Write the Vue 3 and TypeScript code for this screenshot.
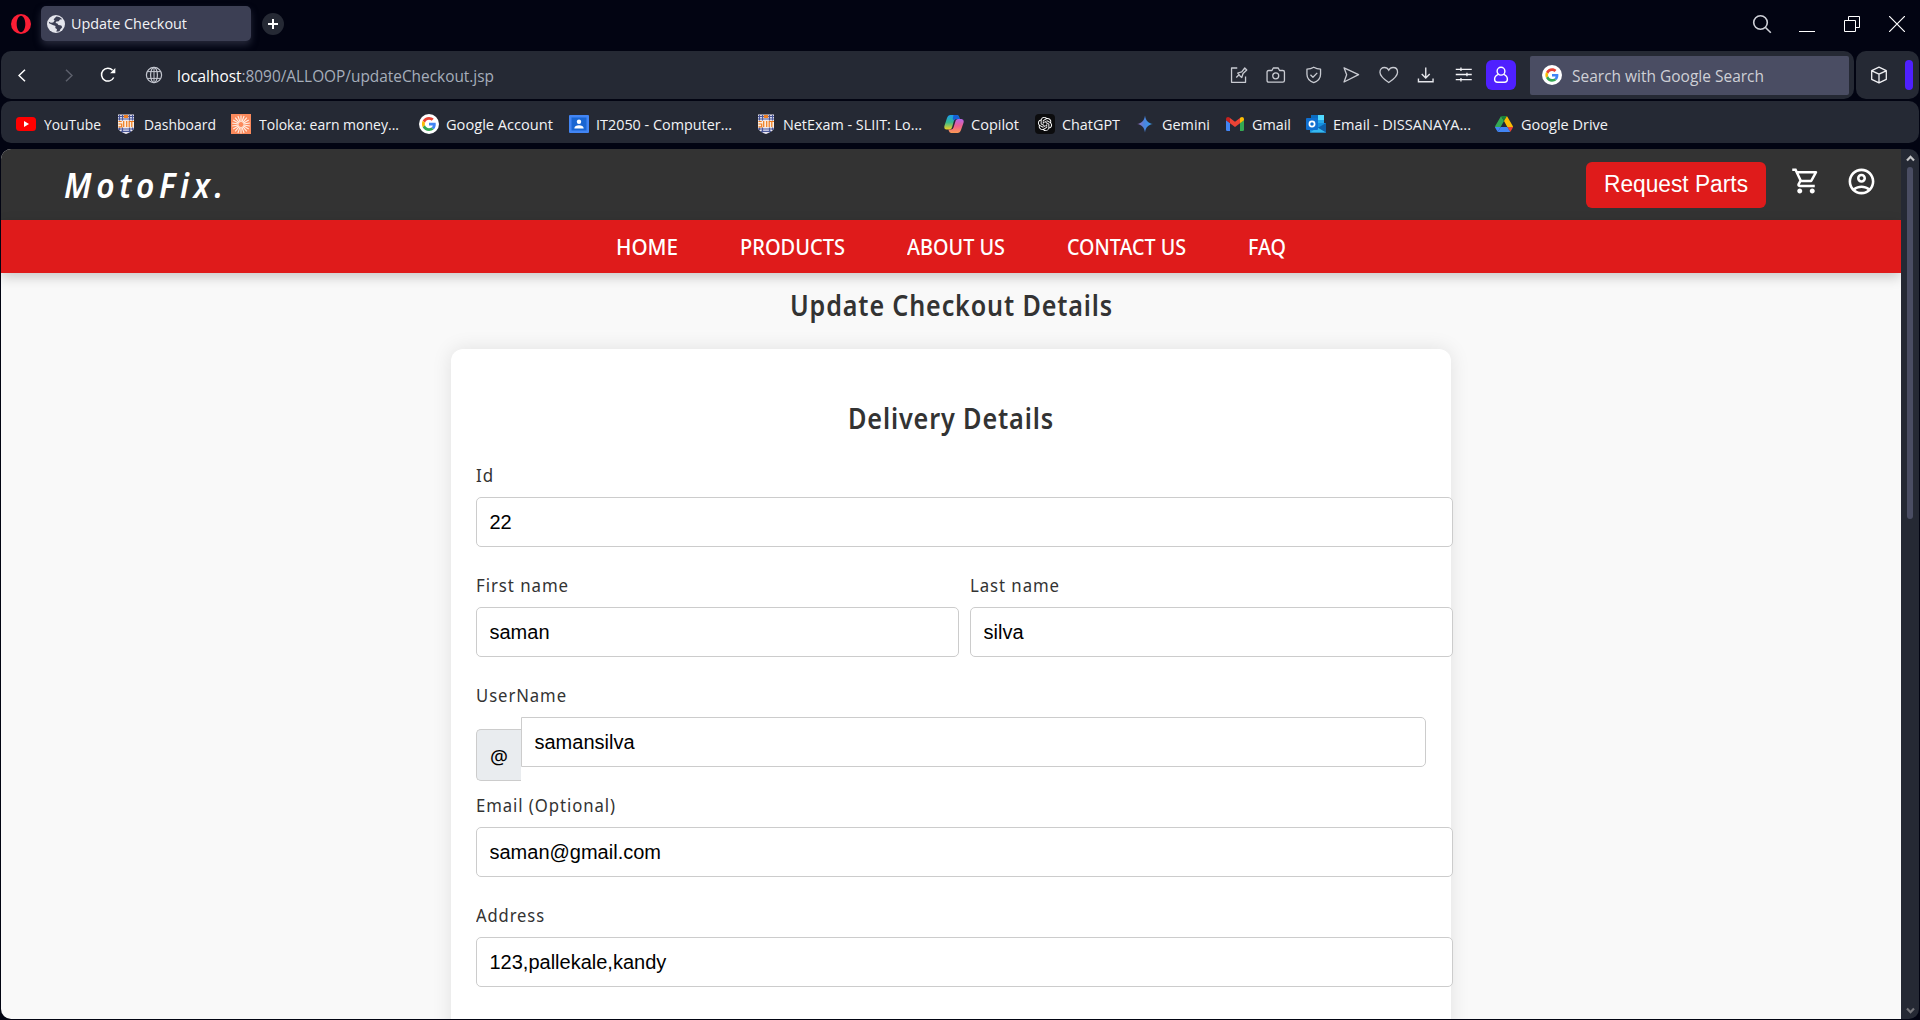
<script setup lang="ts">
import type { Directive } from 'vue'

interface Bookmark {
  icon: string
  label: string
  span: number
  offset: number
  text: number
}

interface Field {
  label: string
  labelWidth: number
  value: string
}

const bookmarks: Bookmark[] = [
  { icon: 'youtube', label: 'YouTube', span: 102, offset: 28, text: 57 },
  { icon: 'sliit', label: 'Dashboard', span: 113, offset: 26, text: 72 },
  { icon: 'toloka', label: 'Toloka: earn money...', span: 188, offset: 28, text: 140 },
  { icon: 'google', label: 'Google Account', span: 150, offset: 27, text: 107 },
  { icon: 'classroom', label: 'IT2050 - Computer...', span: 189, offset: 27, text: 136 },
  { icon: 'sliit', label: 'NetExam - SLIIT: Lo...', span: 186, offset: 25, text: 139 },
  { icon: 'copilot', label: 'Copilot', span: 91, offset: 27, text: 48 },
  { icon: 'chatgpt', label: 'ChatGPT', span: 102, offset: 27, text: 58 },
  { icon: 'gemini', label: 'Gemini', span: 89, offset: 25, text: 48 },
  { icon: 'gmail', label: 'Gmail', span: 80, offset: 26, text: 39 },
  { icon: 'outlook', label: 'Email - DISSANAYA...', span: 189, offset: 27, text: 138 },
  { icon: 'drive', label: 'Google Drive', span: 130, offset: 26, text: 87 },
]

const nav = [
  { label: 'HOME', width: 62 },
  { label: 'PRODUCTS', width: 105 },
  { label: 'ABOUT US', width: 98 },
  { label: 'CONTACT US', width: 119 },
  { label: 'FAQ', width: 38 },
]

const rows: Field[][] = [
  [{ label: 'Id', labelWidth: 18, value: '22' }],
  [
    { label: 'First name', labelWidth: 93, value: 'saman' },
    { label: 'Last name', labelWidth: 90, value: 'silva' },
  ],
]
const lastRows: Field[] = [
  { label: 'Email (Optional)', labelWidth: 140, value: 'saman@gmail.com' },
  { label: 'Address', labelWidth: 69, value: '123,pallekale,kandy' },
]

const rays = Array.from({ length: 18 }, (_, i) => i * 20)

/* Scales a text run horizontally so that it takes the given width. */
const vFit: Directive<HTMLElement, number> = {
  mounted(el, { value }) {
    const natural = el.getBoundingClientRect().width
    el.style.transform = `scaleX(${value / natural})`
    el.style.marginRight = `${value - natural}px`
  },
}
</script>

<template>
  <div class="browser">
    <div class="tabs">
      <svg class="opera" viewBox="0 0 20 20"><path fill="#fa1e35" fill-rule="evenodd" d="M10 0a10 10 0 1 0 0 20 10 10 0 0 0 0-20Zm0 1.800c2.500 0 4.300 3.700 4.300 8.200s-1.800 8.200-4.300 8.200S5.700 14.500 5.700 10 7.500 1.800 10 1.800Z" /></svg>
      <div class="tab">
        <svg width="18" height="18" viewBox="0 0 18 18"><circle cx="9" cy="9" r="9" fill="#e4e5ec" /><path fill="#3c3f54" d="M9.300 1.400c2.500 0 4.600 1.200 5.900 2.900l-2.200.2-1.300 1.800-2.400.1-.8 1.700 1.900.5 1 1.500 2.900.3.900 1.800-2 2.300-.6 1.700-3.200.6.600-2.600-1.700-1.300.2-1.900-2.700-1.100-3.700-1.600-.2-1.600 2 1 2.300-.2 1.400-1.900-1-1.300 1.300-1.400Z" /></svg>
        <span v-fit="116" class="fit">Update Checkout</span>
      </div>
      <div class="plus"><svg width="22" height="22" viewBox="0 0 22 22"><path d="M11 6v10M6 11h10" stroke="#fff" stroke-width="2" /></svg></div>
      <div class="window-controls">
        <svg width="20" height="20" viewBox="0 0 20 20"><g fill="none" stroke="#cfd1d8" stroke-width="1.600"><circle cx="8.500" cy="8.500" r="6.800" /><path d="m13.500 13.500 5.300 5.300" /></g></svg>
        <svg width="16" height="16" viewBox="0 0 16 16"><path d="M0 15.500h16" stroke="#fff" /></svg>
        <svg width="16" height="16" viewBox="0 0 16 16"><path d="M.5 4.500h11v11H.5zM4.500 4.500v-4h11v11h-4" fill="none" stroke="#fff" /></svg>
        <svg width="16" height="16" viewBox="0 0 16 16"><path d="m0 0 16 16M16 0 0 16" stroke="#fff" stroke-width="1.200" /></svg>
      </div>
    </div>

    <div class="toolbar">
      <div class="address">
        <svg class="back" width="8" height="13" viewBox="0 0 8 13"><path d="M7 .7 1 6.500l6 5.800" fill="none" stroke="#fff" stroke-width="1.500" /></svg>
        <svg class="forward" width="8" height="13" viewBox="0 0 8 13"><path d="m1 .7 6 5.800-6 5.800" fill="none" stroke="#5d606c" stroke-width="1.500" /></svg>
        <svg class="reload" width="16" height="16" viewBox="0 0 16 16"><path d="M13.700 10.500A6.400 6.400 0 1 1 12.600 3.300" fill="none" stroke="#fff" stroke-width="1.500" /><path d="M15.300 1v5.200h-5.200Z" fill="#fff" /></svg>
        <svg class="globe" width="18" height="18" viewBox="0 0 18 18"><g fill="none" stroke="#c4c7d0" stroke-width="1.200"><circle cx="9" cy="9" r="7.600" /><ellipse cx="9" cy="9" rx="3.400" ry="7.600" /><path d="M2.300 5.600h13.400M2.300 12.400h13.400M9 1.400v15.200" stroke-width="1" /></g></svg>
        <span v-fit="317" class="fit url"><b>localhost</b>:8090/ALLOOP/updateCheckout.jsp</span>
        <div class="actions">
          <svg viewBox="0 0 18 18"><g fill="none" stroke="#c9cbd2" stroke-width="1.300"><path d="M7.500 2H1.800v14.300h14V10.500M6.500 11.500l3-3M8 7l4-1.200L15 2l2 2-3.700 3.500L12 11.500 10 9.700Z" stroke-linejoin="round" /></g></svg>
          <svg viewBox="0 0 20 18"><g fill="none" stroke="#c9cbd2" stroke-width="1.300" stroke-linejoin="round"><path d="M3 4.500h3.200L7.500 2h5l1.300 2.500H17q1.700 0 1.700 1.600v8.400q0 1.700-1.700 1.700H3q-1.700 0-1.700-1.700V6.100Q1.300 4.500 3 4.500Z" /><circle cx="10" cy="9.800" r="3" /></g></svg>
          <svg viewBox="0 0 18 18"><g fill="none" stroke="#c9cbd2" stroke-width="1.300" stroke-linejoin="round"><path d="M9 1.200c2.200 1.400 4.400 1.900 6.800 1.900v5.200c0 4.200-2.800 6.900-6.800 8.400-4-1.500-6.800-4.200-6.800-8.400V3.100C4.600 3.100 6.800 2.600 9 1.200Z" /><path d="m5.700 8.800 2.500 2.400 4.300-4.300" /></g></svg>
          <svg viewBox="0 0 18 18"><path d="M2.300 1.800 16.800 8.700 2.300 16l2.600-7.300Z" fill="none" stroke="#c9cbd2" stroke-width="1.300" stroke-linejoin="round" /></svg>
          <svg viewBox="0 0 20 18"><path d="M10 16.500C5.200 13.300 1.200 10.300 1.200 6.200 1.200 3.300 3.200 1.500 5.700 1.500c1.900 0 3.400 1 4.300 2.700.9-1.700 2.400-2.700 4.300-2.700 2.500 0 4.500 1.800 4.500 4.700 0 4.100-4 7.100-8.800 10.300Z" fill="none" stroke="#c9cbd2" stroke-width="1.300" /></svg>
          <svg viewBox="0 0 18 18"><path d="M9 1.500v10.300M5 8l4 4 4-4M1.700 12.500v3.200h14.600v-3.200" fill="none" stroke="#e4e5ea" stroke-width="1.400" /></svg>
          <svg viewBox="0 0 18 18"><path d="M1 3.300h16M1 8.500h16M1 13.700h16M6.200 1.500v3.600M12.200 6.700v3.600M6.200 11.900v3.600" fill="none" stroke="#f3f3f6" stroke-width="1.300" /></svg>
        </div>
        <div class="profile"><svg width="18" height="18" viewBox="0 0 18 18"><g fill="none" stroke="#fff" stroke-width="1.400"><circle cx="9" cy="5.200" r="3.900" /><path d="M6.300 8.300C3.700 9.200 2.600 11 2.600 13.300c0 2.200 1.300 3 3 3h6.800c1.700 0 3-.8 3-3 0-2.300-1.100-4.100-3.700-5" /></g></svg></div>
        <div class="search">
          <svg width="20" height="20" viewBox="-12 -12 72 72"><circle cx="24" cy="24" r="36" fill="#fff" /><path fill="#EA4335" d="M24 9.500c3.540 0 6.710 1.220 9.210 3.600l6.850-6.850C35.900 2.380 30.470 0 24 0 14.620 0 6.510 5.380 2.560 13.220l7.980 6.190C12.430 13.720 17.740 9.500 24 9.500z" /><path fill="#4285F4" d="M46.980 24.550c0-1.570-.15-3.090-.38-4.550H24v9.020h12.940c-.58 2.960-2.260 5.480-4.780 7.180l7.730 6c4.510-4.180 7.090-10.360 7.090-17.650z" /><path fill="#FBBC05" d="M10.530 28.590c-.48-1.450-.76-2.990-.76-4.590s.27-3.140.76-4.590l-7.980-6.190C.92 16.460 0 20.120 0 24c0 3.880.92 7.540 2.560 10.780l7.970-6.190z" /><path fill="#34A853" d="M24 48c6.480 0 11.930-2.130 15.890-5.810l-7.730-6c-2.150 1.450-4.920 2.300-8.160 2.300-6.260 0-11.570-4.220-13.470-9.910l-7.980 6.190C6.510 42.620 14.620 48 24 48z" /></svg>
          <span v-fit="192" class="fit">Search with Google Search</span>
        </div>
      </div>
      <div class="side">
        <svg width="18" height="18" viewBox="0 0 18 18"><path d="M9 1.200 16.300 4.600v8.800L9 16.900l-7.300-3.500V4.600ZM1.900 4.800 9 8.200l7.100-3.400M9 8.200v8.500" fill="none" stroke="#f0f0f4" stroke-width="1.300" stroke-linejoin="round" /></svg>
        <i />
      </div>
    </div>

    <div class="bookmarks">
      <div v-for="b in bookmarks" :key="b.label" class="bookmark" :style="{ width: b.span + 'px' }">
        <div class="bm-icon" :style="{ width: b.offset + 'px' }">
          <svg v-if="b.icon === 'youtube'" width="20" height="20" viewBox="0 0 20 20"><rect y="3" width="20" height="14" rx="3.500" fill="#f00" /><path d="m8 7 5 3-5 3Z" fill="#fff" /></svg>
          <svg v-else-if="b.icon === 'sliit'" width="16" height="20" viewBox="0 0 16 20"><path d="M0 .5h16V14q0 3-8 6-8-3-8-6Z" fill="#e9e6f2" /><path d="M1.500 1v15M4.500 1v17.500M11.500 1v17.500M14.500 1v15M0 2.500h16M0 5h16M0 15h16M3 17.300h10" stroke="#4a5798" stroke-width="1.200" /><path d="M5.800 1h4.400v3H5.800z" fill="#f08022" /><path d="M0 6.500h16v7H0z" fill="#fbeee2" /><path d="M.5 7.500h3.200M.5 10h3.200v2.800H.5M5.700 7v6M8.700 7v6M11.200 7v6M11.500 7.500H16M13.800 7v6" fill="none" stroke="#ee7a1c" stroke-width="1.200" /></svg>
          <svg v-else-if="b.icon === 'toloka'" width="20" height="20" viewBox="0 0 20 20"><path fill="#fb8a5c" d="M0 0h20v20H0z" /><path v-for="r in rays" :key="r" d="M10 8V1.500" stroke="#fff0e6" stroke-width="1.100" :transform="`rotate(${r} 10 10.500)`" /></svg>
          <svg v-else-if="b.icon === 'google'" width="20" height="20" viewBox="-10 -10 68 68"><circle cx="24" cy="24" r="34" fill="#fff" /><path fill="#EA4335" d="M24 9.500c3.540 0 6.710 1.220 9.210 3.600l6.850-6.850C35.900 2.380 30.470 0 24 0 14.620 0 6.510 5.380 2.560 13.220l7.980 6.190C12.430 13.720 17.740 9.500 24 9.500z" /><path fill="#4285F4" d="M46.980 24.550c0-1.570-.15-3.090-.38-4.550H24v9.020h12.940c-.58 2.960-2.260 5.480-4.780 7.180l7.730 6c4.510-4.180 7.090-10.360 7.090-17.650z" /><path fill="#FBBC05" d="M10.530 28.590c-.48-1.450-.76-2.990-.76-4.590s.27-3.140.76-4.590l-7.980-6.190C.92 16.460 0 20.120 0 24c0 3.880.92 7.540 2.560 10.780l7.970-6.190z" /><path fill="#34A853" d="M24 48c6.480 0 11.930-2.130 15.890-5.810l-7.730-6c-2.150 1.450-4.920 2.300-8.160 2.300-6.260 0-11.570-4.220-13.470-9.910l-7.980 6.190C6.510 42.620 14.620 48 24 48z" /></svg>
          <svg v-else-if="b.icon === 'classroom'" width="20" height="20" viewBox="0 0 20 20"><rect y="1" width="20" height="18" rx="1" fill="#4285f4" /><rect x="2.500" y="3.500" width="15" height="13" fill="#1a66d2" /><circle cx="10" cy="7.800" r="2.200" fill="#fff" /><path d="M5.300 14.500c0-2.200 2.300-3.200 4.700-3.200s4.700 1 4.700 3.200Z" fill="#fff" /></svg>
          <svg v-else-if="b.icon === 'copilot'" width="20" height="20" viewBox="0 0 20 20">
            <defs>
              <linearGradient id="cpA" x1="0" y1="0" x2="0" y2="1"><stop offset="0" stop-color="#1b9bf0" /><stop offset=".5" stop-color="#35b98f" /><stop offset="1" stop-color="#f5d021" /></linearGradient>
              <linearGradient id="cpB" x1="0" y1="0" x2="0" y2="1"><stop offset="0" stop-color="#b465e8" /><stop offset=".5" stop-color="#ee5f8e" /><stop offset="1" stop-color="#fb9a52" /></linearGradient>
            </defs>
            <path d="M6.500 1h6.300q1.700 0 2.200 1.700L15.700 5H12q-1.500 0-2 1.500L8 13.500Q7.300 16 5 15.500H2.500Q-.3 15.300.4 12L3 4Q4 1 6.500 1Z" fill="url(#cpA)" />
            <path d="M9.500 1h3.300q1.700 0 2.200 1.700L15.700 5H12q-1.500 0-2 1.500L8.700 5Z" fill="#1560d8" />
            <path d="M13.500 19H7.200q-1.700 0-2.200-1.700l-.6-1.800H7q2 0 2.600-2.200L11.700 6.500Q12.200 5 14 5h3.500q2.800.2 2.100 3.500L17 16q-1 3-3.500 3Z" fill="url(#cpB)" />
          </svg>
          <svg v-else-if="b.icon === 'chatgpt'" width="20" height="20" viewBox="-8 -8 40 40"><rect x="-8" y="-8" width="40" height="40" rx="8" fill="#0c0c0e" /><g transform="translate(12 12) scale(1.180) translate(-12 -12)"><path fill="#fff" d="M22.2819 9.8211a5.9847 5.9847 0 0 0-.5157-4.9108 6.0462 6.0462 0 0 0-6.5098-2.9A6.0651 6.0651 0 0 0 4.9807 4.1818a5.9847 5.9847 0 0 0-3.9977 2.9 6.0462 6.0462 0 0 0 .7427 7.0966 5.98 5.98 0 0 0 .511 4.9107 6.051 6.051 0 0 0 6.5146 2.9001A5.9847 5.9847 0 0 0 13.2599 24a6.0557 6.0557 0 0 0 5.7718-4.2058 5.9894 5.9894 0 0 0 3.9977-2.9001 6.0557 6.0557 0 0 0-.7475-7.0729zm-9.022 12.6081a4.4755 4.4755 0 0 1-2.8764-1.0408l.1419-.0804 4.7783-2.7582a.7948.7948 0 0 0 .3927-.6813v-6.7369l2.02 1.1686a.071.071 0 0 1 .038.0615v5.5826a4.504 4.504 0 0 1-4.4945 4.4849zm-9.6607-4.1254a4.4708 4.4708 0 0 1-.5346-3.0137l.142.0852 4.783 2.7582a.7712.7712 0 0 0 .7806 0l5.8428-3.3685v2.3324a.0804.0804 0 0 1-.0332.0615L9.74 19.9502a4.4992 4.4992 0 0 1-6.1408-1.6464zM2.3408 7.8956a4.485 4.485 0 0 1 2.3655-1.9728V11.6a.7664.7664 0 0 0 .3879.6765l5.8144 3.3543-2.0201 1.1685a.0757.0757 0 0 1-.071 0l-4.8303-2.7865A4.504 4.504 0 0 1 2.3408 7.8956zm16.5963 3.8558L13.1038 8.364 15.1192 7.2a.0757.0757 0 0 1 .071 0l4.8303 2.7913a4.4944 4.4944 0 0 1-.6765 8.1042v-5.6772a.79.79 0 0 0-.407-.667zm2.0107-3.0231l-.142-.0852-4.7735-2.7818a.7759.7759 0 0 0-.7854 0L9.409 9.2297V6.8974a.0662.0662 0 0 1 .0284-.0615l4.8303-2.7866a4.4992 4.4992 0 0 1 6.6802 4.66zM8.3065 12.863l-2.02-1.1638a.0804.0804 0 0 1-.038-.0567V6.0742a4.4992 4.4992 0 0 1 7.3757-3.4537l-.142.0805L8.704 5.459a.7948.7948 0 0 0-.3927.6813zm1.0976-2.3654l2.602-1.4998 2.6069 1.4998v2.9994l-2.5974 1.4997-2.6067-1.4997Z" /></g></svg>
          <svg v-else-if="b.icon === 'gemini'" width="16" height="18" viewBox="0 0 16 18">
            <defs><linearGradient id="gem" x1="0" y1="0" x2="1" y2="0"><stop offset="0" stop-color="#a06bb8" /><stop offset=".45" stop-color="#4b83de" /><stop offset="1" stop-color="#35a0ec" /></linearGradient></defs>
            <path d="M8 .5C8.700 5.500 11 8.300 16 9c-5 .7-7.300 3.500-8 8.500C7.300 12.500 5 9.700 0 9c5-.7 7.300-3.500 8-8.500Z" fill="url(#gem)" />
          </svg>
          <svg v-else-if="b.icon === 'gmail'" width="18" height="14" viewBox="0 0 18 14"><path d="M0 3v9.800Q0 14 1.200 14H4V6Z" fill="#4285f4" /><path d="M18 3v9.800q0 1.200-1.200 1.200H14V6Z" fill="#34a853" /><path d="M0 3v-.8C0 .2 2 -.5 3.500.6L4 1v5.300L0 3.300Z" fill="#c5221f" /><path d="M18 3v-.8c0-2-2-2.700-3.500-1.600L14 1v5.300l4-3Z" fill="#fbbc04" /><path d="m4 1 5 3.800L14 1v5.300l-5 3.800-5-3.800Z" fill="#ea4335" /></svg>
          <svg v-else-if="b.icon === 'outlook'" width="20" height="20" viewBox="0 0 20 20"><path d="M5 1h13v11H5z" fill="#28a8ea" /><path d="M12 1h6v5h-6z" fill="#50d9ff" /><path d="M5 1h7v5H5z" fill="#0a6cc0" /><path d="M4 9h16v9.500H4z" fill="#1490df" /><path d="m20 9-8.500 5L20 19Z" fill="#0f5fa8" /><path d="m4 18.500 16 0-8.500-5Z" fill="#35b8f1" /><rect y="4" width="12" height="12" rx="1" fill="#0f6fd0" /><circle cx="6" cy="10" r="2.600" fill="none" stroke="#fff" stroke-width="1.700" /></svg>
          <svg v-else width="18" height="18" viewBox="0 0 87.300 78"><path d="m6.600 66.850 3.850 6.650c.8 1.400 1.950 2.500 3.300 3.300l13.750-23.800h-27.500c0 1.550.4 3.100 1.200 4.500z" fill="#4285f4" /><path d="m43.650 25-13.750-23.800c-1.350.8-2.500 1.900-3.300 3.300l-25.400 44a9.060 9.060 0 0 0-1.200 4.500h27.500z" fill="#34a853" /><path d="m73.550 76.800c1.350-.8 2.500-1.900 3.300-3.300l1.600-2.750 7.650-13.250c.8-1.400 1.200-2.950 1.200-4.500h-27.500l5.850 11.500z" fill="#ea4335" /><path d="m43.650 25 13.750-23.800c-1.350-.8-2.900-1.200-4.500-1.200h-18.500c-1.600 0-3.150.45-4.500 1.200z" fill="#188038" /><path d="m59.800 53h-32.300l-13.750 23.800c1.350.8 2.900 1.200 4.500 1.200h50.800c1.600 0 3.150-.45 4.500-1.200z" fill="#4285f4" /><path d="m73.400 26.500-12.700-22c-.8-1.400-1.950-2.500-3.300-3.300l-13.750 23.800 16.150 28h27.450c0-1.550-.4-3.100-1.200-4.500z" fill="#fbbc04" /></svg>
        </div>
        <span v-fit="b.text" class="fit">{{ b.label }}</span>
      </div>
    </div>

    <div class="viewport">
      <div class="page">
        <header class="site-head">
          <span v-fit="164" class="fit logo">MotoFix.</span>
          <button class="request"><span v-fit="144" class="fit">Request Parts</span></button>
          <svg class="cart" viewBox="0 0 24 24"><path fill="#fff" d="M15.550 13c.75 0 1.410-.41 1.750-1.030l3.580-6.490c.37-.66-.11-1.480-.87-1.480H5.210l-.94-2H1v2h2l3.600 7.590-1.350 2.440C4.520 15.370 5.480 17 7 17h12v-2H7l1.100-2h7.450zM6.160 6h12.150l-2.760 5H8.530L6.160 6zM7 18c-1.100 0-1.990.9-1.990 2S5.900 22 7 22s2-.9 2-2-.9-2-2-2zm10 0c-1.100 0-1.990.9-1.990 2s.89 2 1.990 2 2-.9 2-2-.9-2-2-2z" /></svg>
          <svg class="account" viewBox="0 0 24 24"><path fill="#fff" fill-rule="evenodd" d="M12 2C6.480 2 2 6.480 2 12s4.480 10 10 10 10-4.480 10-10S17.520 2 12 2zM7.350 18.500C8.660 17.560 10.260 17 12 17s3.340.56 4.650 1.500C15.340 19.440 13.740 20 12 20s-3.340-.56-4.650-1.500zm10.790-1.380C16.450 15.800 14.320 15 12 15s-4.450.8-6.140 2.120C4.700 15.730 4 13.950 4 12c0-4.420 3.580-8 8-8s8 3.580 8 8c0 1.950-.7 3.730-1.860 5.120z" /><path fill="#fff" d="M12 6c-1.930 0-3.500 1.570-3.500 3.500S10.070 13 12 13s3.500-1.570 3.500-3.500S13.930 6 12 6zm0 5c-.83 0-1.500-.67-1.500-1.500S11.170 8 12 8s1.500.67 1.500 1.500S12.830 11 12 11z" /></svg>
        </header>
        <nav class="site-nav">
          <a v-for="n in nav" :key="n.label" v-fit="n.width" class="fit">{{ n.label }}</a>
        </nav>
        <h1><span v-fit="323" class="fit">Update Checkout Details</span></h1>
        <form class="card">
          <h2><span v-fit="206" class="fit">Delivery Details</span></h2>
          <div v-for="(row, i) in rows" :key="i" class="row">
            <div v-for="f in row" :key="f.label" class="field">
              <label><span v-fit="f.labelWidth" class="fit">{{ f.label }}</span></label>
              <input type="text" :value="f.value">
            </div>
          </div>
          <div class="row">
            <div class="field">
              <label><span v-fit="91" class="fit">UserName</span></label>
              <div class="group">
                <span class="at">@</span>
                <input type="text" value="samansilva">
              </div>
            </div>
          </div>
          <div v-for="f in lastRows" :key="f.label" class="row">
            <div class="field">
              <label><span v-fit="f.labelWidth" class="fit">{{ f.label }}</span></label>
              <input type="text" :value="f.value">
            </div>
          </div>
        </form>
      </div>
      <div class="scrollbar">
        <svg width="9" height="7" viewBox="0 0 9 7"><path d="m1 5.500 3.500-3.700L8 5.500" fill="none" stroke="#c6c6c8" stroke-width="2.200" /></svg>
        <div class="thumb" />
        <svg width="9" height="7" viewBox="0 0 9 7"><path d="m1 1.500 3.500 3.700L8 1.500" fill="none" stroke="#77777c" stroke-width="2.200" /></svg>
      </div>
    </div>
  </div>
</template>

<style>
body {
  background: #020412;
  overflow: hidden;
}
</style>

<style scoped>
* {
  box-sizing: border-box;
}
.browser {
  width: 1920px;
  height: 1020px;
  padding: 0 1px 1px;
  display: flex;
  flex-direction: column;
  background: #020412;
  font-family: "Open Sans", sans-serif;
  font-size: 15px;
  color: #f2f3f6;
  overflow: hidden;
}
svg {
  display: block;
  flex: none;
}
.fit {
  display: inline-block;
  flex: none;
  white-space: nowrap;
  transform-origin: 0 50%;
}
.tabs {
  height: 51px;
  flex: none;
  display: flex;
  align-items: flex-start;
}
.opera {
  width: 20px;
  height: 20px;
  margin: 14px 10px 0 10px;
}
.tab {
  width: 210px;
  height: 35px;
  margin-top: 6px;
  padding-left: 6px;
  display: flex;
  align-items: center;
  gap: 6px;
  border-radius: 5px;
  background: #3c3f54;
  box-shadow: 0 4px 7px rgba(60, 63, 84, 0.6);
}
.tab .fit {
  padding-bottom: 1px;
}
.plus {
  width: 22px;
  height: 22px;
  margin: 13px 0 0 11px;
  border-radius: 50%;
  background: #252934;
}
.window-controls {
  margin-left: auto;
  padding: 14px 14px 0 0;
  display: flex;
  align-items: center;
  gap: 29px;
}
.window-controls svg:nth-child(2) {
  margin-left: -2px;
}
.toolbar {
  height: 48px;
  flex: none;
  display: flex;
  gap: 2px;
}
.address {
  width: 1853px;
  border-radius: 10px;
  background: #252934;
  display: flex;
  align-items: center;
}
.back {
  margin-left: 17px;
}
.forward {
  margin-left: 39px;
}
.reload {
  margin-left: 27px;
}
.globe {
  margin-left: 29px;
}
.url {
  margin-left: 14px;
  padding-top: 1px;
  font-size: 16px;
  color: #a6aebb;
}
.url b {
  font-weight: 400;
  color: #fff;
}
.actions {
  margin-left: auto;
  display: flex;
}
.actions svg {
  width: 37.500px;
  height: 18px;
}
.profile {
  width: 30px;
  height: 30px;
  margin-left: 4px;
  padding: 6px;
  border-radius: 6px;
  background: #4f20ff;
}
.search {
  width: 319px;
  height: 39px;
  margin: 0 5px 0 14px;
  padding-left: 12px;
  display: flex;
  align-items: center;
  gap: 10px;
  border-radius: 2px;
  background: #4a4d63;
  font-size: 16px;
  color: #cfd0d6;
}
.search .fit {
  padding-top: 1px;
}
.side {
  flex: 1;
  padding: 0 6px 0 14px;
  display: flex;
  align-items: center;
  justify-content: space-between;
  border-radius: 10px;
  background: #252934;
}
.side i {
  width: 8px;
  height: 30px;
  border-radius: 4px;
  background: #4f20ff;
}
.bookmarks {
  height: 42px;
  flex: none;
  margin: 2px 0 6px;
  padding: 3px 0 0 15px;
  display: flex;
  align-items: center;
  border-radius: 10px;
  background: #252934;
}
.bookmark {
  display: flex;
  align-items: center;
  flex: none;
}
.bm-icon {
  flex: none;
}
.viewport {
  flex: 1;
  min-height: 0;
  display: flex;
  border-radius: 10px;
  overflow: hidden;
}
.page {
  width: 1900px;
  overflow: hidden;
  background: #f9f9f9;
  color: #333;
  font-family: "Noto Sans", sans-serif;
}
.site-head {
  height: 71px;
  padding: 0 24px 0 63px;
  display: flex;
  align-items: center;
  background: #333;
}
.logo {
  font-size: 34px;
  line-height: 40px;
  padding-top: 1px;
  font-weight: 600;
  font-style: italic;
  letter-spacing: 5px;
  color: #fff;
}
.request {
  width: 180px;
  height: 46px;
  margin-left: auto;
  padding: 0 0 2px;
  border: 0;
  border-radius: 6px;
  background: #df1b1b;
  color: #fff;
  font: 23px/26px "Liberation Sans", sans-serif;
}
.cart,
.account {
  width: 30px;
  height: 30px;
  margin: 0 0 7px 25px;
}
.account {
  width: 31px;
  height: 31px;
}
.site-nav {
  height: 53px;
  padding-bottom: 2px;
  display: flex;
  justify-content: center;
  align-items: center;
  gap: 62px;
  background: #df1b1b;
  box-shadow: 0 4px 12px rgba(0, 0, 0, 0.2);
  font-size: 22px;
  font-weight: 500;
  line-height: 30px;
  color: #fff;
}
h1,
h2 {
  margin: 0;
  text-align: center;
  font-size: 29.500px;
  line-height: 40px;
  font-weight: 600;
  letter-spacing: 1px;
}
h1 {
  padding: 12px 0 24px;
}
.card {
  width: 1000px;
  height: 800px;
  margin: 0 auto;
  padding: 49px 0 0 25px;
  border-radius: 12px;
  background: #fff;
  box-shadow: 0 0 20px rgba(0, 0, 0, 0.1);
}
h2 {
  padding-right: 25px;
  margin-bottom: 25px;
}
.row {
  width: 977px;
  height: 110px;
  display: flex;
  gap: 11px;
}
.field {
  flex: 1;
  min-width: 0;
}
label {
  display: block;
  height: 24px;
  margin-bottom: 10px;
  font-size: 18px;
  line-height: 24px;
  letter-spacing: 1px;
}
input {
  display: block;
  width: 100%;
  height: 50px;
  margin: 0;
  padding: 0 12.500px;
  border: 1px solid #ccc;
  border-radius: 5px;
  background: #fff;
  font: 20px "Liberation Sans", sans-serif;
  color: #000;
}
.group {
  display: flex;
  width: 950px;
}
.at {
  width: 45px;
  height: 52px;
  flex: none;
  margin-top: 12px;
  border: 1px solid #ccc;
  border-right: 0;
  border-radius: 5px 0 0 5px;
  background: #e9ecef;
  color: #000;
  font-size: 20px;
  line-height: 53px;
  text-align: center;
}
.group input {
  border-radius: 0 5px 5px 0;
}
.scrollbar {
  flex: 1;
  padding: 6px 0 5px;
  display: flex;
  flex-direction: column;
  align-items: center;
  background: #252934;
}
.thumb {
  width: 6px;
  height: 352px;
  margin: 5px 0 auto;
  border-radius: 3px;
  background: #4a4d63;
}
</style>
